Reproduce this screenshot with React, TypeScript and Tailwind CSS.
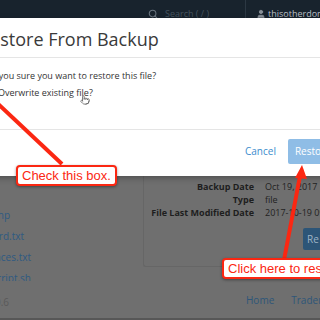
import React from "react";
import { Search, User, Pointer } from "lucide-react";

const details = [
  { label: "Backup Date", value: "Oct 19, 2017" },
  { label: "Type", value: "file" },
  { label: "File Last Modified Date", value: "2017-10-19 09:14" },
];

// each link ends at its own x, the start is cut by the window edge
const files = [
  { name: "index.php", box: "w-[10px]" },
  { name: "password.txt", box: "w-[24px]" },
  { name: "namespaces.txt", box: "w-[31px]" },
  { name: "backup_script.sh", box: "w-[31px]" },
];

function TopBar() {
  return (
    <div className="h-[18px] bg-[#18232d] flex items-start pt-[9px] text-[9px] leading-[10px] overflow-hidden">
      <div className="w-[148px] shrink-0" />
      <Search size={10} strokeWidth={2.5} className="text-[#6b7680] shrink-0" />
      <span className="ml-[7px] w-[80px] shrink-0 text-[#46535f] whitespace-nowrap">Search ( / )</span>
      <div className="w-px h-[18px] -mt-[9px] shrink-0 bg-[#2c3843]" />
      <User size={10} fill="#8a929a" className="ml-[10px] shrink-0 text-[#8a929a]" />
      <span className="ml-[2px] shrink-0 text-[#b8bec4] whitespace-nowrap">thisotherdomain.com</span>
    </div>
  );
}

function Page() {
  return (
    <div className="h-[302px] bg-[#6f6f6f] flex flex-col border-b-2 border-[#575757]">
      <div className="h-[158px]" />
      <div className="flex">
        <div className="w-[143px] shrink-0 flex flex-col text-[10px] leading-[13px] pt-[33px]">
          <div className="h-[72px] overflow-hidden flex flex-col gap-[8px] text-[#2e5a82]">
            {files.map((f) => (
              <div key={f.name} className={`${f.box} flex justify-end whitespace-nowrap`}>
                <span>{f.name}</span>
              </div>
            ))}
          </div>
          <div className="w-[9px] flex justify-end mt-[15px] text-[#5a5a5a] whitespace-nowrap">
            <span>v2.0.6</span>
          </div>
        </div>
        <div className="flex-1 min-w-0 flex flex-col">
          <div className="h-[91px] border-l border-b border-[#666] rounded-bl-[3px] flex flex-col pt-[4px]">
            {details.map((d) => (
              <div key={d.label} className="flex text-[9px] leading-[13px] whitespace-nowrap">
                <span className="w-[110px] shrink-0 text-right font-bold text-[#1e1e1e]">{d.label}</span>
                <span className="ml-[11px] text-[#222]">{d.value}</span>
              </div>
            ))}
            <div className="flex justify-end mt-[9px]">
              <div className="w-[17px] h-[22px] bg-[#2d5577] rounded-l-[2px] text-[10px] text-[#9fb4c6] pl-[4px] pt-[4px] overflow-hidden">Re</div>
            </div>
          </div>
          <div className="flex gap-[17px] pl-[103px] pt-[26px] text-[10px] leading-[14px] text-[#2e5679] whitespace-nowrap">
            <span>Home</span>
            <span>Trademarks</span>
          </div>
        </div>
      </div>
    </div>
  );
}

function Modal() {
  return (
    <div className="absolute top-[18px] left-[-36px] w-[400px] h-[158px] bg-white font-['Open_Sans',sans-serif] shadow-[0_2px_6px_rgba(0,0,0,0.3)]">
      <div className="h-[40px] border-b border-[#e5e5e5] pl-[15px] pt-[9px] text-[18px] leading-[24px] text-[#3a3a3a]">
        Restore From Backup
      </div>
      <div className="h-[72px] border-b border-[#e5e5e5] pl-[18px] pt-[12px] text-[9px] text-[#333] leading-[12px]">
        <p>Are you sure you want to restore this file?</p>
        <label className="flex items-center gap-[5px] mt-[5px] relative">
          <input type="checkbox" className="w-[11px] h-[11px]" />
          <span>Overwrite existing file?</span>
          <Pointer size={10} className="absolute left-[98px] top-[8px] text-[#666]" />
        </label>
      </div>
      <div className="flex items-center pl-[281px] pt-[9px] gap-[12px] text-[10px]">
        <span className="text-[#3d8ccd]">Cancel</span>
        <span className="h-[25px] w-[60px] bg-[#8fbde6] text-white rounded-[2px] pl-[7px] leading-[25px]">Restore</span>
      </div>
    </div>
  );
}

function Annotations() {
  return (
    <>
      <svg className="absolute inset-0" width="320" height="320" viewBox="0 0 320 320">
        <line x1="62" y1="164" x2="-6" y2="100" stroke="#fb2712" strokeWidth="4" />
        <line x1="284" y1="260" x2="300" y2="176" stroke="#fb2712" strokeWidth="4" />
        <polygon points="302,165 295,178 307,179" fill="#fb2712" />
      </svg>
      <div className="absolute left-[16px] top-[165px] h-[21px] px-[4px] border-2 border-[#fb2712] rounded-[4px] bg-white text-[13px] leading-[17px] text-[#fb2712] font-['Liberation_Sans',sans-serif] shadow-[0_1px_3px_rgba(0,0,0,0.4)]">
        Check this box.
      </div>
      <div className="absolute left-[222px] top-[258px] h-[21px] px-[4px] border-2 border-[#fb2712] rounded-[4px] bg-white text-[13px] leading-[17px] text-[#fb2712] whitespace-nowrap font-['Liberation_Sans',sans-serif] shadow-[0_1px_3px_rgba(0,0,0,0.4)]">
        Click here to restore.
      </div>
    </>
  );
}

export default function App() {
  return (
    <div className="relative w-[320px] h-[320px] overflow-hidden font-['Open_Sans',sans-serif]">
      <TopBar />
      <Page />
      <Modal />
      <Annotations />
    </div>
  );
}
